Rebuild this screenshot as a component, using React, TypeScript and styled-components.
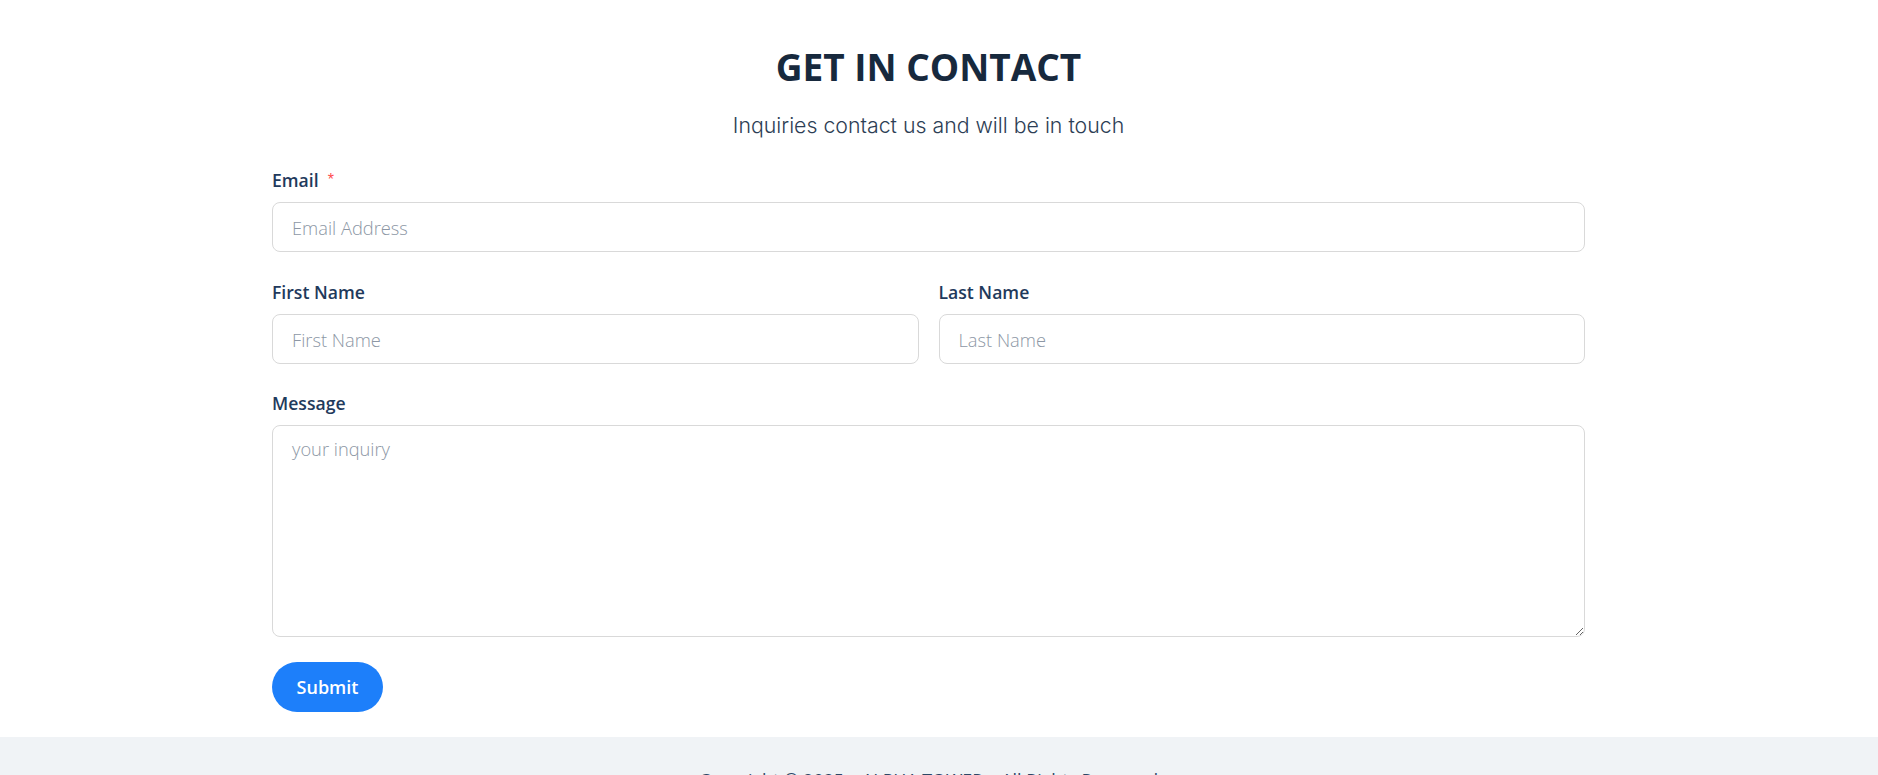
import React from "react";
import styled, { createGlobalStyle } from "styled-components";

const GlobalStyle = createGlobalStyle`
  html, body { margin: 0; padding: 0; background: #ffffff; }
  body { font-family: "Open Sans", "Noto Sans", Arial, sans-serif; }
  * { box-sizing: border-box; }
`;

const Page = styled.div`
  display: flex;
  flex-direction: column;
  min-height: 775px;
  background: #ffffff;
`;

const Section = styled.section`
  padding: 44px 21px 25px 0;
`;

const Container = styled.div`
  max-width: 1313px;
  margin: 0 auto;
`;

const Title = styled.h1`
  margin: 0;
  text-align: center;
  font-family: "Open Sans", "Noto Sans", sans-serif;
  font-weight: 700;
  font-size: 37px;
  line-height: 46px;
  color: #17293d;
`;

const Subtitle = styled.p`
  margin: 21px 0 29px;
  text-align: center;
  font-family: Inter, "Noto Sans", sans-serif;
  font-weight: 300;
  font-size: 21.3px;
  line-height: 28px;
  color: #2d3e55;
`;

const Form = styled.form`
  display: flex;
  flex-direction: column;
`;

const Row = styled.div`
  display: grid;
  grid-template-columns: 1fr 1fr;
  gap: 20px;
`;

const Item = styled.div<{ $gap: number }>`
  display: flex;
  flex-direction: column;
  margin-bottom: ${(p) => p.$gap}px;
`;

const Label = styled.label`
  display: flex;
  align-items: center;
  gap: 9px;
  margin-bottom: 10px;
  font-family: "Open Sans", "Noto Sans", sans-serif;
  font-weight: 600;
  font-size: 17.6px;
  line-height: 24px;
  color: #1f3a5c;
`;

const Required = styled.span`
  color: #ff4d4f;
  font-weight: 400;
  font-size: 16px;
  font-family: SimSun, "Liberation Sans", sans-serif;
`;

const fieldBase = `
  width: 100%;
  border: 1px solid #d9d9d9;
  border-radius: 8px;
  background: #ffffff;
  font-family: "Open Sans", "Noto Sans", sans-serif;
  font-weight: 300;
  font-size: 18.3px;
  color: #1f3a5c;
  outline: none;
  &::placeholder { color: #8d97a5; opacity: 1; }
`;

const Input = styled.input`
  ${fieldBase}
  height: 50px;
  padding: 0 19px;
`;

const TextArea = styled.textarea`
  ${fieldBase}
  height: 212px;
  padding: 11px 19px;
  line-height: 24px;
  resize: vertical;
  display: block;
`;

const SubmitButton = styled.button`
  align-self: flex-start;
  width: 111px;
  height: 50px;
  border: none;
  border-radius: 25px;
  background: #1d7ffa;
  color: #ffffff;
  font-family: "Open Sans", "Noto Sans", sans-serif;
  font-weight: 600;
  font-size: 18px;
  cursor: pointer;
`;

const Footer = styled.footer`
  flex: 1;
  background: #f0f3f6;
  padding: 30px 21px 27px 0;
  text-align: center;
  font-family: "Open Sans", "Noto Sans", sans-serif;
  font-size: 17.8px;
  line-height: 26px;
  color: #2c4766;
`;

export default function App() {
  return (
    <Page>
      <GlobalStyle />
      <Section>
        <Container>
          <Title>GET IN CONTACT</Title>
          <Subtitle>Inquiries contact us and will be in touch</Subtitle>
          <Form onSubmit={(e) => e.preventDefault()}>
            <Item $gap={28}>
              <Label htmlFor="email">
                Email <Required>*</Required>
              </Label>
              <Input id="email" type="email" placeholder="Email Address" />
            </Item>
            <Row>
              <Item $gap={27}>
                <Label htmlFor="first">First Name</Label>
                <Input id="first" placeholder="First Name" />
              </Item>
              <Item $gap={27}>
                <Label htmlFor="last">Last Name</Label>
                <Input id="last" placeholder="Last Name" />
              </Item>
            </Row>
            <Item $gap={25}>
              <Label htmlFor="message">Message</Label>
              <TextArea id="message" placeholder="your inquiry" />
            </Item>
            <SubmitButton type="submit">Submit</SubmitButton>
          </Form>
        </Container>
      </Section>
      <Footer>Copyright © 2025 – ALPHA TOWER – All Rights Reserved</Footer>
    </Page>
  );
}
